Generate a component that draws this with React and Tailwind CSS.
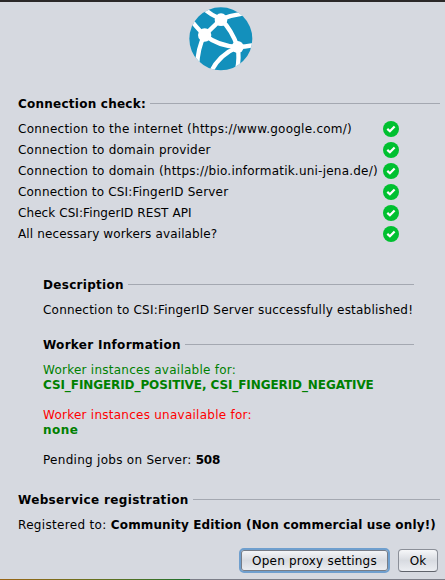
const CHECKS = [
  ['Connection to the internet (https://www.google.com/)', 'tracking-[0.25px]'],
  ['Connection to domain provider', 'tracking-[0.22px]'],
  ['Connection to domain (https://bio.informatik.uni-jena.de/)', 'tracking-[0.22px]'],
  ['Connection to CSI:FingerID Server', 'tracking-[0.19px]'],
  ['Check CSI:FingerID REST API', 'tracking-[0.08px]'],
  ['All necessary workers available?', 'tracking-[0.14px]'],
];

function Logo() {
  return (
    <svg className="block h-[64px] w-[64px]" viewBox="56 20 192 192">
      <defs>
        <clipPath id="globe">
          <circle cx="151.5" cy="115.5" r="94.5" />
        </clipPath>
      </defs>
      <circle cx="151.5" cy="115.5" r="94.5" fill="#1390bc" />
      <g clipPath="url(#globe)" fill="none" stroke="#fff" strokeWidth="13">
        <path d="M98 24Q124 45 152 57Q184 44 220 39" />
        <path d="M152 57L103 104Q86 90 64 62" />
        <path d="M103 104Q82 142 80 200" />
        <path d="M103 104Q143 137 202 140" />
        <path d="M152 57Q184 88 202 140" />
        <path d="M202 140Q225 139 252 134" />
        <path d="M202 140Q208 174 200 208" />
        <path d="M202 140Q146 164 122 214" />
        <g fill="#fff" stroke="none">
          <circle cx="152" cy="58" r="19" />
          <circle cx="103" cy="104" r="20" />
          <circle cx="202" cy="140" r="18" />
        </g>
      </g>
    </svg>
  );
}

function CheckIcon() {
  return (
    <svg className="mb-px block h-4 w-4" viewBox="0 0 16 16">
      <circle cx="8" cy="8" r="8" fill="#00c030" />
      <path d="M4.3 7.9L6.9 10.3L11.6 5.4" fill="none" stroke="#fff" strokeWidth="2.2" />
    </svg>
  );
}

function Heading({ children, tracking }) {
  return (
    <div className="flex h-[15px] items-center gap-[4px]">
      <h2 className={`pt-[2px] font-bold ${tracking}`}>{children}</h2>
      <div className="h-px flex-1 bg-[#a4a8b1]" />
    </div>
  );
}

export default function App() {
  return (
    <div className="flex h-[580px] w-[445px] flex-col overflow-hidden whitespace-nowrap bg-[#d6d9e0] font-['DejaVu_Sans',sans-serif] text-[12px] leading-[15px] text-black">
      <div className="h-[2px] shrink-0 bg-[#2b2828]" />
      <div className="flex h-[94px] shrink-0 pt-[5px] pl-[189px]">
        <Logo />
      </div>
      <section className="h-[181px] shrink-0 pr-[5px] pl-[18px]">
        <Heading tracking="tracking-[0.24px]">Connection check:</Heading>
        <ul className="pt-[8px]">
          {CHECKS.map(([label, tracking]) => (
            <li key={label} className="flex h-[21px] items-center">
              <span className={`w-[365px] ${tracking}`}>{label}</span>
              <CheckIcon />
            </li>
          ))}
        </ul>
      </section>
      <section className="h-[60px] shrink-0 pr-[31px] pl-[43px]">
        <Heading tracking="tracking-[0.3px]">Description</Heading>
        <p className="pt-[11px] tracking-[0.21px]">Connection to CSI:FingerID Server successfully established!</p>
      </section>
      <section className="h-[155px] shrink-0 pr-[31px] pl-[43px]">
        <Heading tracking="tracking-[0.3px]">Worker Information</Heading>
        <p className="pt-[11px] tracking-[0.25px] text-[#008000]">Worker instances available for:</p>
        <p className="font-bold tracking-[-0.09px] text-[#008000]">CSI_FINGERID_POSITIVE, CSI_FINGERID_NEGATIVE</p>
        <p className="pt-[15px] tracking-[0.25px] text-[#ff0000]">Worker instances unavailable for:</p>
        <p className="font-bold tracking-[0.5px] text-[#008000]">none</p>
        <p className="pt-[15px] tracking-[0.28px]">
          Pending jobs on Server: <b className="tracking-[-0.1px]">508</b>
        </p>
      </section>
      <section className="h-[56px] shrink-0 pr-[5px] pl-[18px]">
        <Heading tracking="tracking-[0.36px]">Webservice registration</Heading>
        <p className="pt-[11px] tracking-[0.33px]">
          Registered to: <b className="tracking-[0.14px]">Community Edition (Non commercial use only!)</b>
        </p>
      </section>
      <div className="flex h-[31px] shrink-0 items-start gap-[8px] pl-[239px]">
        <button className="h-[25px] w-[151px] rounded-[5px] border-2 border-[#6f9fce] bg-linear-to-b from-[#f6f7f9] via-[#d8dbe1] to-[#eceef2] px-0 pt-[2px] pb-0 tracking-[0.2px] shadow-[inset_0_0_0_1px_#777d88]">
          Open proxy settings
        </button>
        <button className="mt-px h-[23px] w-[40px] rounded-[4px] border border-[#8b8f98] border-b-[#5f636b] bg-linear-to-b from-[#f6f7f9] via-[#d8dbe1] to-[#eceef2] px-0 pt-[2px] pb-0">
          Ok
        </button>
      </div>
      <div className="flex h-px shrink-0">
        <div className="w-[190px] bg-linear-to-r from-[#9a6515] via-[#67701e] to-[#10702c]" />
        <div className="flex-1 bg-[#7c7e88]" />
      </div>
    </div>
  );
}
